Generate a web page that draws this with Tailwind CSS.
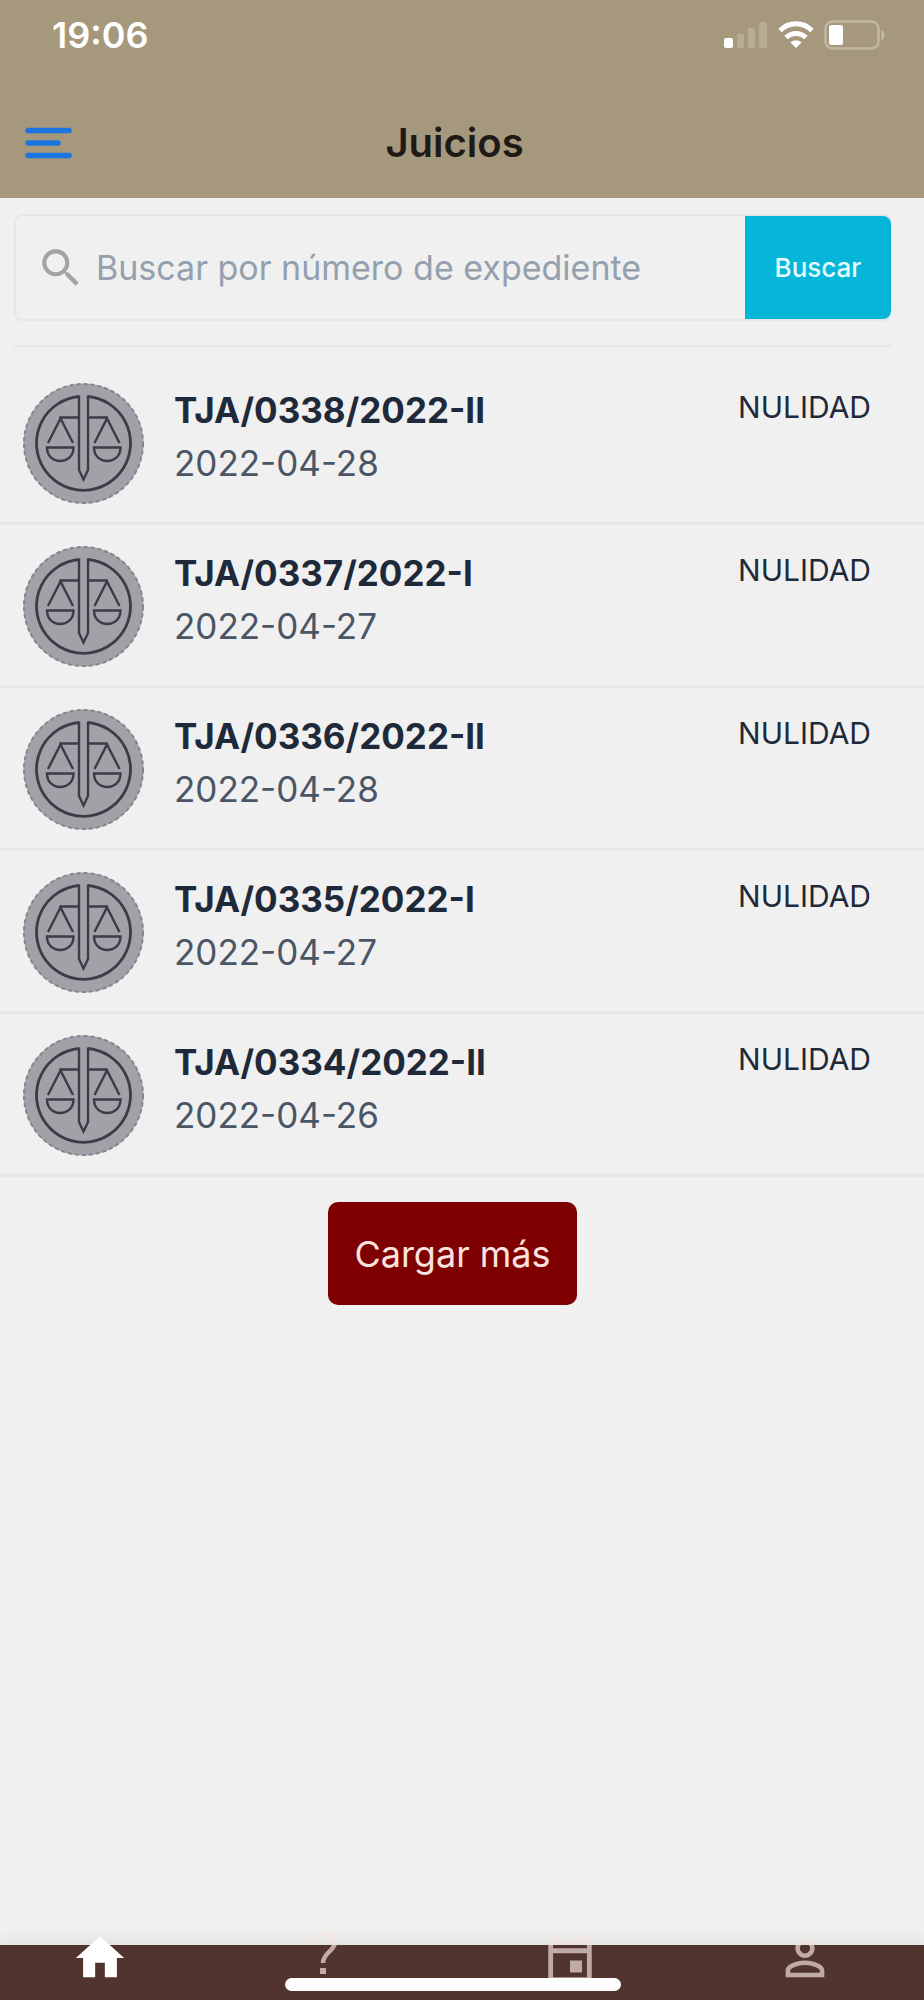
<!DOCTYPE html>
<html lang="es">
	<head>
		<meta charset="UTF-8" />
		<meta name="viewport" content="width=device-width, initial-scale=1.0" />
		<title>Juicios</title>
		<script src="https://cdn.jsdelivr.net/npm/@tailwindcss/browser@4"></script>
	</head>
	<body
		class="flex min-h-screen flex-col bg-[#f0f0f0] font-['Inter','Liberation_Sans',sans-serif] text-gray-800"
	>
		<!-- Icono de la balanza, compartido por todas las filas -->
		<svg class="hidden">
			<symbol id="balanza" viewBox="0 0 121 121">
				<circle cx="60.5" cy="60.5" r="60" fill="#a1a1a8" />
				<circle cx="60.5" cy="60.5" r="59.5" fill="none" stroke="#85858d" stroke-width="2" stroke-dasharray="4 3" />
				<g fill="none" stroke="#3c3b48" stroke-width="2.4">
					<path d="M56 13.5A47 47 0 1 0 65 13.5" stroke-width="2.8" />
					<path d="M56 12.5V87l4.500 9.500L65 87V12.500" />
					<path d="M56 34.500H36.500M65 34.500H84.500" />
					<path d="M25 60L37.500 35.500 50 60M71.500 60L84 35.500 96.500 60" />
					<path d="M24 64.500H50.500C50.500 82.500 24 82.500 24 64.500ZM71 64.500H97.500C97.500 82.500 71 82.500 71 64.500Z" />
				</g>
			</symbol>
		</svg>

		<header class="bg-[#a6987c]">
			<!-- Barra de estado -->
			<div class="flex h-[70px] items-center justify-between pr-[38px] pl-[52px] text-white">
				<span class="text-[36px] leading-[40px] font-semibold">19:06</span>
				<div class="flex items-center gap-[10px]">
					<svg class="h-[30px] w-[44px]" viewBox="0 0 44 30" fill="#fff">
						<rect x="0" y="18" width="9" height="10" rx="2" />
						<g fill-opacity=".2">
							<rect x="13" y="14" width="7" height="14" rx="2" />
							<rect x="24" y="8" width="7" height="20" rx="2" />
							<rect x="35" y="2" width="8" height="26" rx="2" />
						</g>
					</svg>
					<svg class="h-[30px] w-[36px]" viewBox="0 0 36 30" fill="none" stroke="#fff" stroke-width="5">
						<path d="M2 10.500C11 1.500 25 1.500 34 10.500" />
						<path d="M8 17.500C14 12 22 12 28 17.500" />
						<path d="M18 28L12.500 22.500C15.500 19.500 20.500 19.500 23.500 22.500Z" fill="#fff" stroke="none" />
					</svg>
					<svg class="h-[30px] w-[62px]" viewBox="0 0 62 30">
						<rect x="1.500" y="1.500" width="53" height="27" rx="7" fill="none" stroke="#fff" stroke-opacity=".3" stroke-width="2.500" />
						<path d="M57.500 10C61.500 11.500 61.500 18.500 57.500 20Z" fill="#fff" fill-opacity=".35" />
						<rect x="5" y="5" width="14" height="20" rx="2.500" fill="#fff" />
					</svg>
				</div>
			</div>
			<!-- Título -->
			<div class="grid h-[128px] grid-cols-[1fr_auto_1fr] items-center pt-[18px] pr-[40px] pl-[25px]">
				<button type="button" aria-label="Menú" class="w-fit">
					<svg class="h-[32px] w-[48px]" viewBox="0 0 48 32" fill="none" stroke="#1b74e0" stroke-width="5.500" stroke-linecap="round">
						<path d="M3 3.500H44M3 16H33M3 28.500H44" />
					</svg>
				</button>
				<h1 class="text-[40px] leading-[48px] font-semibold text-[#1f1a17]">Juicios</h1>
			</div>
		</header>

		<main class="grow">
			<!-- Buscador -->
			<form class="mt-4 mr-[33px] ml-[14px] flex h-[107px] rounded-lg border-2 border-[#e6e6e7]">
				<label for="expediente" class="flex items-center pl-5">
					<svg class="size-[50px]" viewBox="0 0 24 24" fill="#a3a3a3">
						<path d="M15.500 14h-.79l-.28-.27C15.410 12.590 16 11.110 16 9.500 16 5.910 13.090 3 9.500 3S3 5.910 3 9.500 5.910 16 9.500 16c1.610 0 3.090-.59 4.230-1.570l.27.28v.79l5 4.990L20.490 19l-4.990-5zm-6 0C7.010 14 5 11.990 5 9.500S7.010 5 9.500 5 14 7.010 14 9.500 11.990 14 9.500 14z" />
					</svg>
				</label>
				<input
					id="expediente"
					type="text"
					placeholder="Buscar por número de expediente"
					class="min-w-0 grow bg-transparent pl-[10px] text-[34px] placeholder:text-[#94a0ae] focus:outline-none"
				/>
				<button type="button" class="-mr-[2px] w-[146px] rounded-r-lg bg-[#06b6d8] text-[26px] font-medium text-[#e6fbff]">
					Buscar
				</button>
			</form>
			<hr class="mt-6 mr-[33px] ml-[14px] border-t-2 border-[#e6e6e7]" />

			<!-- Lista de juicios -->
			<ul class="mt-[15px]">
				<li class="flex h-[163px] items-start border-b-3 border-[#e7e7e8] pt-[21px] pr-[53px] pl-[23px]">
					<svg class="size-[121px] shrink-0"><use href="#balanza" /></svg>
					<div class="ml-[30px] grow pt-px">
						<p class="text-[35px] leading-[53px] font-bold">TJA/0338/2022-II</p>
						<p class="text-[35px] leading-[53px] text-gray-600">2022-04-28</p>
					</div>
					<span class="text-[30px] leading-[48px]">NULIDAD</span>
				</li>
				<li class="flex h-[163px] items-start border-b-3 border-[#e7e7e8] pt-[21px] pr-[53px] pl-[23px]">
					<svg class="size-[121px] shrink-0"><use href="#balanza" /></svg>
					<div class="ml-[30px] grow pt-px">
						<p class="text-[35px] leading-[53px] font-bold">TJA/0337/2022-I</p>
						<p class="text-[35px] leading-[53px] text-gray-600">2022-04-27</p>
					</div>
					<span class="text-[30px] leading-[48px]">NULIDAD</span>
				</li>
				<li class="flex h-[163px] items-start border-b-3 border-[#e7e7e8] pt-[21px] pr-[53px] pl-[23px]">
					<svg class="size-[121px] shrink-0"><use href="#balanza" /></svg>
					<div class="ml-[30px] grow pt-px">
						<p class="text-[35px] leading-[53px] font-bold">TJA/0336/2022-II</p>
						<p class="text-[35px] leading-[53px] text-gray-600">2022-04-28</p>
					</div>
					<span class="text-[30px] leading-[48px]">NULIDAD</span>
				</li>
				<li class="flex h-[163px] items-start border-b-3 border-[#e7e7e8] pt-[21px] pr-[53px] pl-[23px]">
					<svg class="size-[121px] shrink-0"><use href="#balanza" /></svg>
					<div class="ml-[30px] grow pt-px">
						<p class="text-[35px] leading-[53px] font-bold">TJA/0335/2022-I</p>
						<p class="text-[35px] leading-[53px] text-gray-600">2022-04-27</p>
					</div>
					<span class="text-[30px] leading-[48px]">NULIDAD</span>
				</li>
				<li class="flex h-[163px] items-start border-b-3 border-[#e7e7e8] pt-[21px] pr-[53px] pl-[23px]">
					<svg class="size-[121px] shrink-0"><use href="#balanza" /></svg>
					<div class="ml-[30px] grow pt-px">
						<p class="text-[35px] leading-[53px] font-bold">TJA/0334/2022-II</p>
						<p class="text-[35px] leading-[53px] text-gray-600">2022-04-26</p>
					</div>
					<span class="text-[30px] leading-[48px]">NULIDAD</span>
				</li>
			</ul>

			<div class="mt-[25px] mr-[33px] ml-[14px] flex justify-center">
				<button type="button" class="h-[103px] rounded-[10px] bg-[#7f0000] px-[26px] text-[36px] text-[#fbe3df]">
					Cargar más
				</button>
			</div>
		</main>

		<!-- Pestañas -->
		<footer class="relative h-[55px] bg-[#51342e] shadow-[0_-2px_16px_rgba(80,50,45,0.12)]">
			<nav class="grid grid-cols-[199fr_247fr_248fr_222fr] justify-items-center pr-2">
				<a href="#" aria-label="Inicio" class="-mt-4">
					<svg class="size-[58px]" viewBox="0 0 24 24" fill="#fff">
						<path d="M10 20v-6h4v6h5v-8h3L12 3 2 12h3v8z" />
					</svg>
				</a>
				<a href="#" aria-label="Ayuda" class="-mt-4">
					<svg class="size-[58px]" viewBox="0 0 58 58" fill="none" stroke="#f4e4e0" stroke-opacity=".68" stroke-width="4.500">
						<path d="M19 14C21 2 41 2 41 13C41 22 29.500 23 29 34" />
						<path d="M26 42H32" stroke-width="6" />
					</svg>
				</a>
				<a href="#" aria-label="Agenda" class="-mt-4">
					<svg class="size-[58px]" viewBox="0 0 24 24" fill="#f4e4e0" fill-opacity=".68">
						<path d="M19 4h-1V2h-2v2H8V2H6v2H5c-1.110 0-1.990.9-1.990 2L3 20c0 1.100.89 2 2 2h14c1.100 0 2-.9 2-2V6c0-1.100-.9-2-2-2zm0 16H5V10h14v10zm0-12H5V6h14v2zm-2 5h-5v5h5v-5z" />
					</svg>
				</a>
				<a href="#" aria-label="Perfil" class="-mt-4">
					<svg class="size-[58px]" viewBox="0 0 24 24" fill="#f4e4e0" fill-opacity=".68">
						<path d="M12 5.900c1.160 0 2.100.94 2.100 2.100s-.94 2.100-2.100 2.100S9.900 9.160 9.900 8s.94-2.100 2.100-2.100m0 9c2.970 0 6.100 1.460 6.100 2.100v1.100H5.900V17c0-.64 3.130-2.100 6.100-2.100M12 4C9.790 4 8 5.790 8 8s1.790 4 4 4 4-1.790 4-4-1.790-4-4-4zm0 9c-2.670 0-8 1.340-8 4v3h16v-3c0-2.660-5.330-4-8-4z" />
					</svg>
				</a>
			</nav>
			<!-- Indicador de inicio -->
			<div class="absolute bottom-[9px] left-[49%] h-[13px] w-[336px] -translate-x-1/2 rounded-full bg-white"></div>
		</footer>
	</body>
</html>
